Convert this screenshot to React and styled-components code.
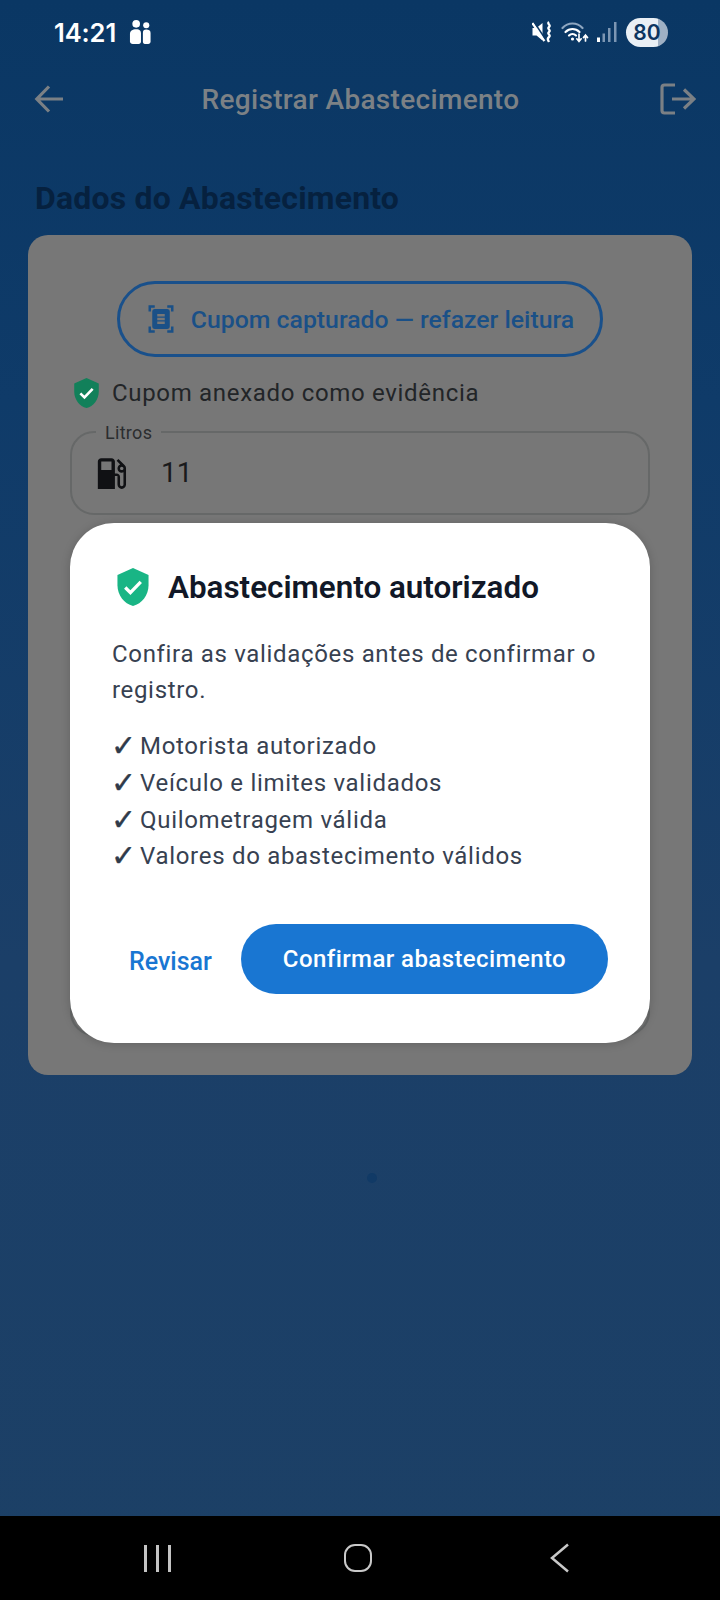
import React from "react";
import styled, { createGlobalStyle } from "styled-components";

const Global = createGlobalStyle`
  html, body { margin: 0; padding: 0; background: #000; }
  * { box-sizing: border-box; }
  body { font-family: Roboto, "Liberation Sans", sans-serif; }
`;

const Page = styled.div`
  position: relative;
  width: 720px;
  height: 1600px;
  display: flex;
  flex-direction: column;
  overflow: hidden;
  background: linear-gradient(180deg, #0a3764 0%, #0f3b69 25%, #1b3f68 60%, #1c4066 100%);
`;

const StatusBar = styled.div`
  height: 64px;
  padding: 0 52px 0 54px;
  display: flex;
  align-items: center;
  justify-content: space-between;
  color: #fff;
`;
const StatusGroup = styled.div`
  display: flex;
  align-items: center;
  gap: ${(p) => p.$gap || 9}px;
`;
const Clock = styled.span`
  font-family: Inter, Roboto, sans-serif;
  font-size: 25.5px;
  font-weight: 600;
  letter-spacing: -0.1px;
`;
const Battery = styled.div`
  width: 42px;
  height: 29px;
  margin-left: 1px;
  border-radius: 15px;
  display: flex;
  align-items: center;
  justify-content: center;
  font-family: Inter, Roboto, sans-serif;
  font-size: 21px;
  font-weight: 600;
  color: #0c3560;
  background: linear-gradient(90deg, #e9eff5 0%, #e9eff5 76%, #9fb0c4 76%, #9fb0c4 100%);
`;

const AppBar = styled.div`
  height: 68px;
  padding: 2px 24px 0 34px;
  display: flex;
  align-items: center;
  justify-content: space-between;
`;
const AppTitle = styled.h1`
  margin: 0 0 0 -3px;
  font-size: 28px;
  font-weight: 500;
  letter-spacing: 0.32px;
  color: #7c8185;
`;
const SectionTitle = styled.h2`
  margin: 48px 0 19px 35px;
  font-size: 32px;
  line-height: 36px;
  font-weight: 700;
  letter-spacing: 0.18px;
  color: #06213f;
`;

const Card = styled.div`
  margin: 0 28px;
  height: 840px;
  padding: 46px 42px 39px;
  border-radius: 20px;
  background: #777777;
  display: flex;
  flex-direction: column;
`;
const ScanButton = styled.div`
  align-self: center;
  width: 486px;
  height: 76px;
  border: 3px solid #19508b;
  border-radius: 38px;
  display: flex;
  align-items: center;
  justify-content: center;
  gap: 15px;
  font-size: 24.8px;
  font-weight: 500;
  color: #1a5087;
`;
const EvidenceRow = styled.div`
  margin-top: 18px;
  height: 36px;
  padding-left: 4px;
  display: flex;
  align-items: center;
  gap: 13px;
  font-size: 24px;
  letter-spacing: 0.68px;
  color: #222528;
`;
const Field = styled.div`
  position: relative;
  margin-top: ${(p) => p.$top}px;
  height: ${(p) => p.$height}px;
  flex: none;
  border: 2px solid #666868;
  border-radius: 24px;
  padding-left: 20px;
  display: flex;
  align-items: center;
  gap: 29px;
`;
const FieldLabel = styled.span`
  position: absolute;
  top: -11px;
  left: 24px;
  padding: 0 9px;
  background: #777777;
  font-size: 18px;
  line-height: 22px;
  letter-spacing: 0.3px;
  color: #2b2d2f;
`;
const FieldValue = styled.span`
  font-size: 28px;
  color: #1a1a1c;
  margin-top: -2px;
`;

const Spacer = styled.div`
  flex: 1;
  padding-top: 98px;
  display: flex;
  justify-content: center;
`;
const LoaderDot = styled.div`
  width: 10px;
  height: 10px;
  margin-left: 24px;
  border-radius: 50%;
  background: #113a66;
`;

const NavBar = styled.div`
  height: 84px;
  background: #000;
  display: flex;
  align-items: center;
  color: #c9c9c9;
  padding: 0 150px 0 144px;
  justify-content: space-between;
`;
const NavBars = styled.div`
  display: flex;
  gap: 9.5px;
`;
const NavBarLine = styled.div`
  width: 2.5px;
  height: 27px;
  background: #c4c4c4;
`;
const NavHome = styled.div`
  width: 28px;
  height: 28px;
  margin-right: 5px;
  border: 2.5px solid #c9c9c9;
  border-radius: 11px;
`;

const Dialog = styled.div`
  position: absolute;
  left: 70px;
  top: 523px;
  width: 580px;
  height: 520px;
  padding: 44px 42px 49px;
  border-radius: 44px;
  background: #fff;
  box-shadow: 0 1px 10px rgba(0, 0, 0, 0.18);
  display: flex;
  flex-direction: column;
`;
const DialogHeader = styled.div`
  height: 40px;
  display: flex;
  align-items: center;
  gap: 19px;
  padding-left: 5px;
`;
const DialogTitle = styled.h3`
  margin: 0;
  font-size: 31.4px;
  font-weight: 600;
  color: #111827;
`;
const DialogText = styled.p`
  margin: 30px 0 0;
  font-size: 24px;
  line-height: 35.5px;
  letter-spacing: 0.67px;
  color: #374151;
`;
const CheckList = styled.ul`
  list-style: none;
  margin: 20px 0 0;
  padding: 0;
`;
const CheckItem = styled.li`
  display: flex;
  font-size: 24px;
  line-height: 36.8px;
  letter-spacing: 0.7px;
  color: #374151;
`;
const CheckMark = styled.span`
  flex: none;
  width: 29px;
  margin-left: -1px;
  font-family: "DejaVu Sans", sans-serif;
  font-size: 30px;
  color: #2f3a4a;
  -webkit-text-stroke: 0.4px #2f3a4a;
`;
const Actions = styled.div`
  margin-top: auto;
  display: flex;
  align-items: center;
  justify-content: space-between;
  padding-left: 17px;
`;
const TextAction = styled.span`
  font-size: 25px;
  font-weight: 500;
  color: #1976d2;
  margin-top: 5px;
`;
const PrimaryAction = styled.div`
  width: 367px;
  height: 70px;
  border-radius: 35px;
  background: #1976d2;
  color: #fff;
  font-size: 24px;
  font-weight: 500;
  letter-spacing: 0.42px;
  display: flex;
  align-items: center;
  justify-content: center;
`;

const Shield = ({ width, height, color }) => (
  <svg width={width} height={height} viewBox="3 1 18 22" style={{ flex: "none" }}>
    <path d="M12 1L3 5v6c0 5.55 3.84 10.74 9 12 5.16-1.26 9-6.45 9-12V5l-9-4z" fill={color} />
    <path d="M7.500 12.300l3 3 6-6.300" fill="none" stroke="#fff" strokeWidth="1.900" />
  </svg>
);

const Fuel = () => (
  <svg width="41" height="41" viewBox="0 0 24 24" fill="#101114" style={{ flex: "none", marginLeft: -1 }}>
    <path d="M19.77 7.23l.01-.01-3.72-3.72L15 4.56l2.11 2.11c-.94.36-1.61 1.26-1.61 2.33 0 1.38 1.12 2.5 2.5 2.5.36 0 .69-.08 1-.21v7.21c0 .55-.45 1-1 1s-1-.45-1-1V14c0-1.1-.9-2-2-2h-1V5c0-1.1-.9-2-2-2H6c-1.1 0-2 .9-2 2v16h10v-7.5h1.5v5c0 1.38 1.12 2.5 2.5 2.5s2.5-1.12 2.5-2.5V9c0-.69-.28-1.32-.73-1.77zM12 10H6V5h6v5zm6 0c-.55 0-1-.45-1-1s.45-1 1-1 1 .45 1 1-.45 1-1 1z" />
  </svg>
);

const Scan = () => (
  <svg width="30" height="30" viewBox="0 0 24 24" fill="#1a5087" fillRule="evenodd" style={{ flex: "none" }}>
    <path d="M7 3H4v3H2V1h5v2zm15 3V1h-5v2h3v3h2zM7 21H4v-3H2v5h5v-2zm13-3v3h-3v2h5v-5h-2zM19 18c0 1.1-.9 2-2 2H7c-1.1 0-2-.9-2-2V6c0-1.1.9-2 2-2h10c1.1 0 2 .9 2 2v12zM15 8H9v2h6V8zm0 3H9v2h6v-2zm0 3H9v2h6v-2z" />
  </svg>
);

const People = () => (
  <svg width="23" height="26" viewBox="0 0 24 26" fill="#fff">
    <circle cx="7.500" cy="4.500" r="4" />
    <circle cx="18" cy="6" r="3.200" />
    <path d="M1 15c0-3.500 2.500-5 6.500-5s5 1.500 5 5v8c0 1.500-1 2.500-2.500 2.500H4c-1.800 0-3-1-3-2.500z" />
    <path d="M14.500 14c0-2.500 1-3.500 3.500-3.500s4.500 1 4.500 3.500v9c0 1.500-1 2.500-2.500 2.500h-3.500c-1.300 0-2-1-2-2.500z" />
  </svg>
);

const Mute = () => (
  <svg width="22" height="22" viewBox="0 0 22 22" fill="none" style={{ marginRight: -1 }}>
    <path d="M0.500 7h4L10.500 2v17.500L4.500 14.500h-4z" fill="#fff" />
    <path d="M0.500 2L12.500 20" stroke="#fff" strokeWidth="2.400" />
    <path d="M1.800 0.500L14 19" stroke="#0b3866" strokeWidth="1.400" />
    <path d="M17 1c-2.500 2 2.500 3 0 5s2.500 3 0 5 2.500 3 0 5-1 3 0 5" stroke="#fff" strokeWidth="2.300" />
  </svg>
);

const Wifi = () => (
  <svg width="28" height="22" viewBox="0 0 28 22" fill="none" strokeLinecap="round">
    <path d="M1.500 7C7 1 16 1 21.500 7" stroke="#8ea6c0" strokeWidth="2.200" />
    <path d="M4.500 11c4-4 10-4 14 0" stroke="#fff" strokeWidth="2.200" />
    <path d="M8 14.500c2-2 5-2 7 0" stroke="#fff" strokeWidth="2.200" />
    <circle cx="11.500" cy="18" r="1.600" fill="#fff" />
    <path d="M18 13v7M15.800 17.800L18 20.500l2.200-2.700M24.500 20v-6M22.500 16.500l2-2.500 2 2.500" stroke="#fff" strokeWidth="1.700" />
  </svg>
);

const Signal = () => (
  <svg width="20" height="20" viewBox="0 0 20 20">
    <rect x="0" y="15.500" width="3" height="4.500" fill="#fff" />
    <rect x="5.500" y="11.500" width="2.500" height="8.500" fill="#7c96b3" />
    <rect x="11" y="6" width="2.500" height="14" fill="#7c96b3" />
    <rect x="17" y="0" width="2.500" height="20" fill="#7c96b3" />
  </svg>
);

const Back = () => (
  <svg width="30" height="30" viewBox="0 0 30 30" fill="none" stroke="#7b8085" strokeWidth="3.200">
    <path d="M29 15H3M15 2.500L2.800 15 15 27.500" />
  </svg>
);

const Exit = () => (
  <svg width="36" height="32" viewBox="0 0 36 32" fill="none" stroke="#7b8085" strokeWidth="3.200">
    <path d="M15 2H4.500C3 2 2 3 2 4.500v23C2 29 3 30 4.500 30H15" />
    <path d="M12 16h22M24 6.500L34 16 24 25.500" />
  </svg>
);

const ChevronBack = () => (
  <svg width="20" height="30" viewBox="0 0 20 30" fill="none" stroke="#c9c9c9" strokeWidth="2.500">
    <path d="M18 1.500L2 15 18 28.500" />
  </svg>
);

const checks = [
  "Motorista autorizado",
  "Veículo e limites validados",
  "Quilometragem válida",
  "Valores do abastecimento válidos",
];

export default function App() {
  return (
    <Page>
      <Global />
      <StatusBar>
        <StatusGroup $gap={13}>
          <Clock>14:21</Clock>
          <People />
        </StatusGroup>
        <StatusGroup $gap={8}>
          <Mute />
          <Wifi />
          <Signal />
          <Battery>80</Battery>
        </StatusGroup>
      </StatusBar>
      <AppBar>
        <Back />
        <AppTitle>Registrar Abastecimento</AppTitle>
        <Exit />
      </AppBar>
      <SectionTitle>Dados do Abastecimento</SectionTitle>
      <Card>
        <ScanButton>
          <Scan />
          Cupom capturado — refazer leitura
        </ScanButton>
        <EvidenceRow>
          <Shield width={25} height={30} color="#12805a" />
          Cupom anexado como evidência
        </EvidenceRow>
        <Field $top={20} $height={84}>
          <FieldLabel>Litros</FieldLabel>
          <Fuel />
          <FieldValue>11</FieldValue>
        </Field>
        <Field $top={25} $height={496} />
      </Card>
      <Spacer>
        <LoaderDot />
      </Spacer>
      <NavBar>
        <NavBars>
          <NavBarLine />
          <NavBarLine />
          <NavBarLine />
        </NavBars>
        <NavHome />
        <ChevronBack />
      </NavBar>
      <Dialog role="dialog">
        <DialogHeader>
          <Shield width={32} height={38} color="#19b585" />
          <DialogTitle>Abastecimento autorizado</DialogTitle>
        </DialogHeader>
        <DialogText>Confira as validações antes de confirmar o registro.</DialogText>
        <CheckList>
          {checks.map((c) => (
            <CheckItem key={c}>
              <CheckMark>✓</CheckMark>
              {c}
            </CheckItem>
          ))}
        </CheckList>
        <Actions>
          <TextAction>Revisar</TextAction>
          <PrimaryAction>Confirmar abastecimento</PrimaryAction>
        </Actions>
      </Dialog>
    </Page>
  );
}
